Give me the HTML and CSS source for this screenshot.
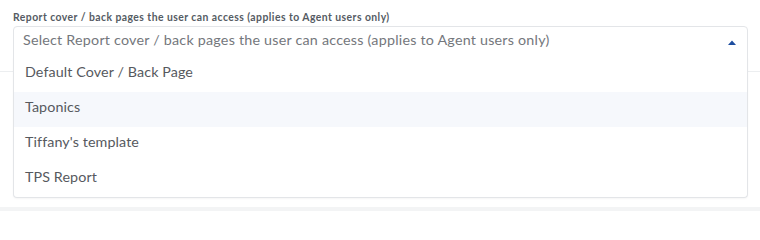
FILE: index.html
```html
<!DOCTYPE html>
<html>
<head>
<meta charset="utf-8">
<link rel="stylesheet" href="styles.css">
</head>
<body>
<div class="page">
  <div class="field">
    <label class="field-label">Report cover / back pages the user can access (applies to Agent users only)</label>
    <div class="select">
      <div class="select-control">
        <span class="placeholder">Select Report cover / back pages the user can access (applies to Agent users only)</span>
        <svg class="caret" width="8" height="5" viewBox="0 0 8 5"><path d="M0 5 L4 0.6 L8 5 Z" fill="#1d4d9f"/></svg>
      </div>
      <ul class="menu">
        <li class="option">Default Cover / Back Page</li>
        <li class="option option-hover">Taponics</li>
        <li class="option">Tiffany's template</li>
        <li class="option">TPS Report</li>
      </ul>
    </div>
  </div>
  <div class="behind">
    <div class="divider"></div>
  </div>
  <div class="footer-band"></div>
</div>
</body>
</html>
```
FILE: styles.css
```css
html, body {
  margin: 0;
  padding: 0;
  background: #ffffff;
}
.page {
  position: relative;
  width: 760px;
  height: 211px;
  overflow: hidden;
  font-family: Lato, "Noto Sans", sans-serif;
}
.field {
  padding: 11px 12px 0 13px;
}
.field-label {
  display: block;
  font-size: 10.4px;
  line-height: 12px;
  font-weight: 700;
  color: #555b63;
  letter-spacing: 0.45px;
  margin-bottom: 3px;
}
.select {
  position: relative;
  z-index: 2;
}
.select-control {
  display: flex;
  align-items: center;
  justify-content: space-between;
  height: 30px;
  border: 1px solid #e3e5e8;
  border-radius: 4px 4px 0 0;
  padding: 0 10px 0 9px;
  background: #fff;
}
.placeholder {
  font-size: 14.3px;
  line-height: 18px;
  margin-top: -4px;
  color: #74777c;
  letter-spacing: 0.22px;
}
.caret {
  display: block;
  margin-right: 1px;
}
.menu {
  position: absolute;
  left: 0;
  right: 0;
  top: 31px;
  margin: 0;
  padding: 0;
  list-style: none;
  background: #fff;
  border: 1px solid #e3e5e8;
  border-top: none;
  border-radius: 0 0 4px 4px;
  box-shadow: 0 1px 2px rgba(0,0,0,0.04);
}
.option {
  height: 35px;
  line-height: 29px;
  padding-left: 11px;
  font-size: 14.3px;
  color: #56595e;
  letter-spacing: 0.1px;
}
.option-hover {
  background: #f6f8fc;
}
.behind {
  position: absolute;
  left: 0;
  right: 0;
  top: 71px;
  z-index: 1;
}
.divider {
  height: 1px;
  background: #eceef0;
}
.footer-band {
  position: absolute;
  left: 0;
  right: 0;
  top: 207px;
  height: 4px;
  background: #f3f4f5;
}
```
